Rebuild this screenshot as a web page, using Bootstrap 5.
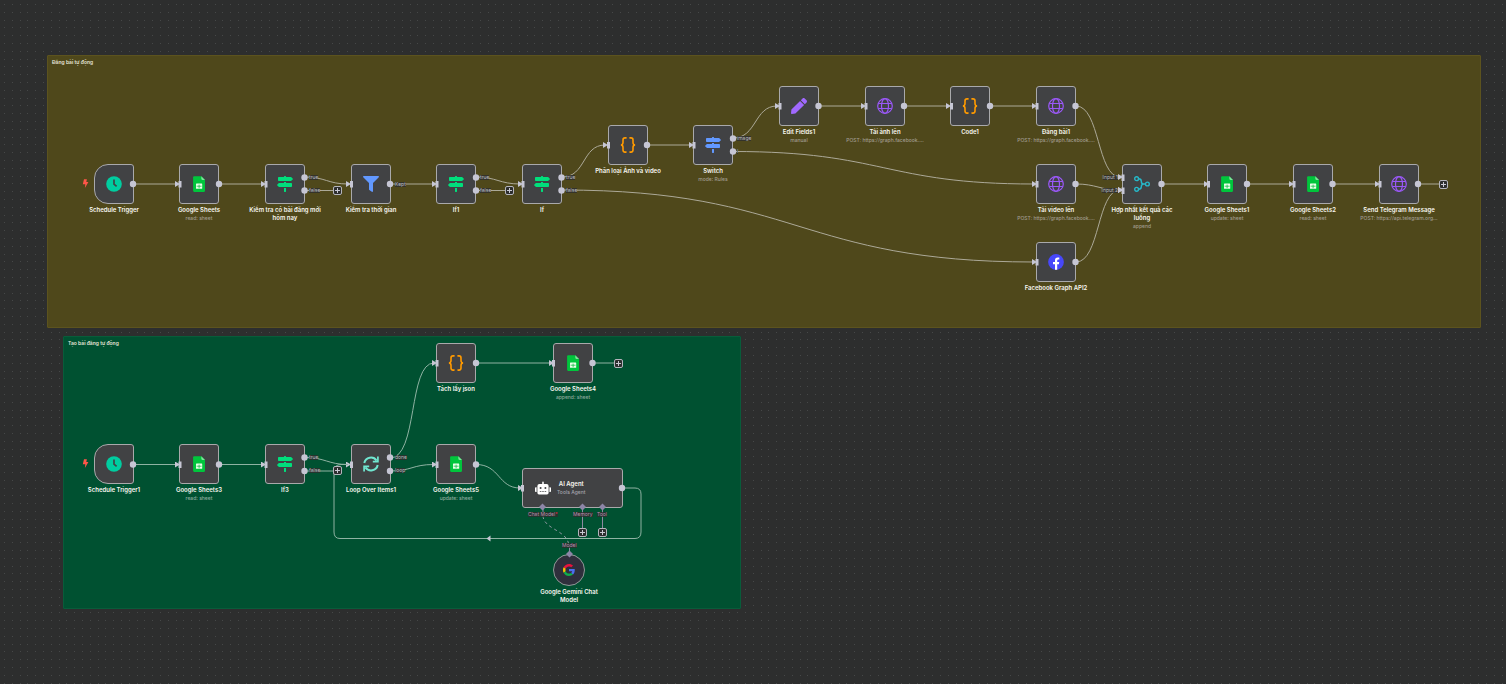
<!DOCTYPE html>
<html lang="vi">
<head>
<meta charset="utf-8">
<meta name="viewport" content="width=device-width, initial-scale=1">
<title>Workflow</title>
<link href="https://cdn.jsdelivr.net/npm/bootstrap@5.3.0/dist/css/bootstrap.min.css" rel="stylesheet">
<style>
  body { background: #2d2e2e; font-family: Inter, "Noto Sans", sans-serif; color: #f8f7f0; }
  .canvas { min-height: 100vh; min-width: 1500px; }
  .layer { left: 0; top: 0; pointer-events: none; }
  .sticky { border: 1px solid; border-radius: 1px; padding: 3px 4px; }
  .sticky h2 { font-size: 5px; line-height: 7px; font-weight: 600; color: #e6e4d8; }
  .sticky-post { left: 47px; top: 55px; width: 1434px; height: 273px; background: #4f481b; border-color: #5c531e; }
  .sticky-make { left: 63px; top: 336px; width: 678px; height: 273px; background: #005131; border-color: #085c3a; }

  .step { width: 80px; font-size: 6px; line-height: 8px; font-weight: 600; text-align: center; white-space: nowrap; }
  .tile { width: 40px; height: 40px; background: #414244; border: 1px solid #a9a9ab; border-radius: 3px; margin-bottom: 2px; }
  .tile.start { border-radius: 14px 3px 3px 14px; }
  .tile svg { width: 16px; height: 16px; }
  .info { font-size: 5px; line-height: 8px; font-weight: 500; color: #a19d90; }
  .sheet-two .info { color: #8dab9f; }
  .bolt { width: 7px; height: 9px; left: 8px; top: 15px; }

  .c1 { left: 74px } .c2 { left: 159px } .c3 { left: 245px } .c4 { left: 331px } .c5 { left: 416px }
  .c6 { left: 502px } .c7 { left: 588px } .c8 { left: 673px } .c9 { left: 759px } .c10 { left: 845px }
  .c11 { left: 930px } .c12 { left: 1016px } .c13 { left: 1102px } .c14 { left: 1187px } .c15 { left: 1273px }
  .c16 { left: 1359px } .c-mid { left: 533px } .c-model { left: 529px }
  .r1 { top: 86px } .r2 { top: 125px } .r3 { top: 164px } .r4 { top: 242px } .r5 { top: 343px } .r6 { top: 444px }
  .r-agent { top: 468px } .r-model { top: 554px }

  .port { font-size: 5px; line-height: 5px; font-weight: 400; color: #bcbcc0; background: #2d2e2ecc; left: 43px; white-space: nowrap; }
  .port-up { top: 10px } .port-down { top: 23px } .port-mid { top: 17px }
  .port-in { left: auto; right: 43px; }
  .agent { width: 100px; left: 522px; }
  .agent .tile { width: 101px; }
  .agent .tile > div { margin-left: 6px; }
  .agent .info { color: #a3a3ad; }
  .agent-port { color: #b98fae; top: 44px; }
  .p-chat { left: 6px } .p-memory { left: 51px } .p-tool { left: 75px }
  .model-port { left: 33px; top: -11px; color: #b98fae; }
  .round { width: 32px; height: 32px; border-radius: 50%; background: #2f2f3c; margin-bottom: 2px; border: 1px solid #8f9a98; }
  .round svg { width: 12px; height: 12px; }

  .add { width: 9px; height: 9px; padding: 0; border: 1px solid #b5b5bd; border-radius: 2px; background: #2d2e2e; }
  .add svg { width: 5px; height: 5px; display: block; margin: 1px; }
  .a1 { left: 333px; top: 186px } .a2 { left: 505px; top: 186px } .a3 { left: 1439px; top: 180px }
  .a4 { left: 614px; top: 359px } .a5 { left: 333px; top: 466px } .a6 { left: 578px; top: 528px } .a7 { left: 598px; top: 528px }
</style>
<script src="https://cdn.jsdelivr.net/npm/bootstrap@5.3.0/dist/js/bootstrap.bundle.min.js"></script>
</head>
<body>
<svg class="d-none">
  <symbol id="clock" viewBox="0 0 16 16"><circle cx="8" cy="8" r="7.8" fill="#00cda0"/><path d="M8 3.6V8.2L10.6 10.4" fill="none" stroke="#404346" stroke-width="1.7"/></symbol>
  <symbol id="sheet" viewBox="0 0 16 16"><path d="M3.2.2H10.300L14 3.900V14.800Q14 15.900 12.900 15.900H3.200Q2.100 15.900 2.100 14.800V1.300Q2.100.2 3.200.2Z" fill="#00c53c"/><path d="M10.300.2L14 3.900H11.400Q10.300 3.900 10.300 2.800Z" fill="#7fe29a"/><rect x="5" y="7.600" width="6.200" height="5.200" rx=".4" fill="#e9ffe9"/><path d="M5.600 10.200H10.600M8.100 8.600V12.300" stroke="#00b838" stroke-width=".7"/></symbol>
  <symbol id="signs" viewBox="0 0 512 512"><path fill="currentColor" d="M507.300 84.700L459.300 36.700C456.300 33.700 452.200 32 448 32H288V16c0-8.800-7.200-16-16-16h-32c-8.800 0-16 7.200-16 16v16H56c-13.300 0-24 10.700-24 24v80c0 13.300 10.700 24 24 24h392c4.200 0 8.300-1.700 11.300-4.700l48-48c6.300-6.200 6.300-16.400 0-22.600zM224 496c0 8.800 7.200 16 16 16h32c8.800 0 16-7.200 16-16V384h-64v112zm232-272H288v-32h-64v32H64c-4.200 0-8.300 1.700-11.300 4.700l-48 48c-6.200 6.200-6.200 16.400 0 22.600l48 48c3 3 7.100 4.700 11.300 4.700h392c13.300 0 24-10.700 24-24v-80c0-13.300-10.700-24-24-24z"/></symbol>
  <symbol id="filter" viewBox="0 0 512 512"><path fill="#6298ff" d="M487.976 0H24.028C2.710 0-8.047 25.866 7.058 40.971L192 225.941V432c0 7.831 3.821 15.170 10.237 19.662l80 55.980C298.020 518.690 320 507.493 320 487.980V225.941l184.947-184.970C520.021 25.896 509.338 0 487.976 0z"/></symbol>
  <symbol id="braces" viewBox="0 0 16 16"><path d="M6 .9H5Q3 .9 3 2.900V5.600Q3 7.900.9 8Q3 8.100 3 10.400V13.100Q3 15.100 5 15.100H6M10 .9H11Q13 .9 13 2.900V5.600Q13 7.900 15.100 8Q13 8.100 13 10.400V13.100Q13 15.100 11 15.100H10" fill="none" stroke="#ff9a00" stroke-width="1.600" stroke-linecap="round"/></symbol>
  <symbol id="pencil" viewBox="0 0 512 512"><path fill="#a069ff" d="M290.740 93.240l128.020 128.020-277.990 277.990-114.140 12.600C11.350 513.540-1.560 500.620.14 485.340l12.700-114.220 277.900-277.880zm207.200-19.060l-60.110-60.110c-18.750-18.750-49.160-18.750-67.910 0l-56.550 56.550 128.020 128.020 56.550-56.550c18.750-18.760 18.750-49.160 0-67.910z"/></symbol>
  <symbol id="globe" viewBox="0 0 16 16"><g fill="none" stroke="#9a58f8" stroke-width="1.200"><circle cx="8" cy="8" r="7.300"/><ellipse cx="8" cy="8" rx="3.500" ry="7.300"/><path d="M1.200 5.500H14.800M1.200 10.500H14.800"/></g></symbol>
  <symbol id="merge" viewBox="0 0 16 16"><g fill="none" stroke="#27b8c9" stroke-width="1.400"><circle cx="2.600" cy="2.700" r="1.900"/><circle cx="2.600" cy="13.300" r="1.900"/><circle cx="13.400" cy="8" r="1.900"/><path d="M4.500 2.700Q7.300 2.700 7.300 5.200Q7.300 8 9.600 8Q7.300 8 7.300 10.800Q7.300 13.300 4.500 13.300M9.300 8H11.500"/></g></symbol>
  <symbol id="facebook" viewBox="0 0 16 16"><circle cx="8" cy="8" r="7.900" fill="#4747fb"/><path d="M7 15.800V10.200H5V8H7V6.300Q7 3.500 9.700 3.500H11.300V5.500H10.200Q9.200 5.500 9.200 6.500V8H11.200L10.900 10.200H9.200V15.800Z" fill="#fff"/></symbol>
  <symbol id="sync" viewBox="0 0 16 16"><g fill="none" stroke="#70e6d0" stroke-width="2"><path d="M1.300 7A6.800 6.800 0 0 1 13.600 4.600M14.700 9A6.800 6.800 0 0 1 2.400 11.400"/><path d="M14.900.6V5.700H9.800M1.100 15.400V10.300H6.200" stroke-width="1.700"/></g></symbol>
  <symbol id="robot" viewBox="0 0 640 512"><path fill="#fff" d="M32,224H64V416H32A32,32,0,0,1,0,384V256A32,32,0,0,1,32,224Zm512-48V448a64,64,0,0,1-64,64H160a64,64,0,0,1-64-64V176a80,80,0,0,1,80-80H288V32a32,32,0,0,1,64,0V96H464A80,80,0,0,1,544,176ZM264,256a40,40,0,1,0-40,40A40,40,0,0,0,264,256Zm-8,128H192v32h64Zm96,0H288v32h64ZM456,256a40,40,0,1,0-40,40A40,40,0,0,0,456,256Zm-8,128H384v32h64ZM640,256V384a32,32,0,0,1-32,32H576V224h32A32,32,0,0,1,640,256Z"/></symbol>
  <symbol id="google" viewBox="0 0 48 48"><path fill="#e8113c" d="M24 9.500c3.540 0 6.710 1.220 9.210 3.600l6.850-6.850C35.900 2.380 30.470 0 24 0 14.620 0 6.510 5.380 2.560 13.220l7.980 6.190C12.430 13.720 17.740 9.500 24 9.500z"/><path fill="#4b6ff0" d="M46.980 24.550c0-1.570-.15-3.090-.38-4.550H24v9.020h12.940c-.58 2.960-2.260 5.480-4.780 7.180l7.730 6c4.510-4.180 7.090-10.360 7.090-17.650z"/><path fill="#f5c400" d="M10.530 28.590c-.48-1.450-.76-2.990-.76-4.590s.27-3.140.76-4.590l-7.980-6.190C.92 16.460 0 20.120 0 24c0 3.880.92 7.540 2.560 10.780l7.970-6.190z"/><path fill="#0fae4b" d="M24 48c6.480 0 11.930-2.130 15.890-5.810l-7.730-6c-2.150 1.450-4.920 2.300-8.160 2.300-6.260 0-11.570-4.220-13.470-9.910l-7.980 6.190C6.510 42.620 14.620 48 24 48z"/></symbol>
  <symbol id="bolt" viewBox="0 0 7 9"><path d="M2 .2H4.900L4.300 3H6.400L2.900 8.900L3.300 5.300H.8Z" fill="#ff5549"/></symbol>
  <symbol id="plus" viewBox="0 0 5 5"><path d="M2.500 0V5M0 2.500H5" stroke="#c9c9d2" stroke-width="1"/></symbol>
</svg>

<main class="canvas position-relative overflow-hidden">
  <!-- dotted canvas grid -->
  <svg class="layer position-absolute w-100 h-100" aria-hidden="true">
    <defs>
      <pattern id="dots" width="39" height="39" patternUnits="userSpaceOnUse">
        <path stroke="#464848" stroke-width="1" stroke-dasharray="1 7 1 7 1 6 1 7 1 7" d="M4 4.500H43M4 12.500H43M4 20.500H43M4 27.500H43M4 35.500H43"/>
      </pattern>
    </defs>
    <rect width="100%" height="100%" fill="url(#dots)"/>
  </svg>

  <section class="sticky sticky-post position-absolute"><h2 class="m-0">Đăng bài tự động</h2></section>
  <section class="sticky sticky-make position-absolute"><h2 class="m-0">Tạo bài đăng tự động</h2></section>

  <!-- connections -->
  <svg class="layer position-absolute w-100 h-100" aria-hidden="true">
    <defs><marker id="tip" markerUnits="userSpaceOnUse" markerWidth="5" markerHeight="6" refX="2" refY="3" orient="0"><path d="M0 0L5 3L0 6Z" fill="#c6c6d4"/></marker></defs>
    <g fill="none" stroke="#aca998">
      <path marker-end="url(#tip)" d="M133 184H177"/><path marker-end="url(#tip)" d="M219 184H263"/>
      <path marker-end="url(#tip)" d="M305 177C325 177 328 184 348 184"/><path d="M305 190.500H333"/>
      <path marker-end="url(#tip)" d="M390 184H434"/><path marker-end="url(#tip)" d="M476 177C496 177 500 184 520 184"/><path d="M476 190.500H505"/>
      <path marker-end="url(#tip)" d="M562 177C586 177 582 145 605 145"/><path marker-end="url(#tip)" d="M562 190C798 190 798 262 1034 262"/>
      <path marker-end="url(#tip)" d="M647 145H691"/><path marker-end="url(#tip)" d="M733 138C757 138 754 106 777 106"/>
      <path marker-end="url(#tip)" d="M733 151.500C884 151.500 884 184 1034 184"/>
      <path marker-end="url(#tip)" d="M819 106H863"/><path marker-end="url(#tip)" d="M904 106H948"/><path marker-end="url(#tip)" d="M990 106H1034"/>
      <path marker-end="url(#tip)" d="M1076 106C1100 106 1097 177 1120 177"/><path marker-end="url(#tip)" d="M1076 184C1096 184 1100 190 1120 190"/><path marker-end="url(#tip)" d="M1076 262C1100 262 1097 190 1120 190"/>
      <path marker-end="url(#tip)" d="M1162 184H1206"/><path marker-end="url(#tip)" d="M1247 184H1291"/><path marker-end="url(#tip)" d="M1333 184H1377"/><path d="M1419 184H1440"/>
    </g>
    <g fill="none" stroke="#8fb3a3">
      <path marker-end="url(#tip)" d="M133 464.500H177"/><path marker-end="url(#tip)" d="M219 464.500H263"/>
      <path marker-end="url(#tip)" d="M305 457.500C325 457.500 328 464.500 348 464.500"/><path d="M305 471H333"/>
      <path marker-end="url(#tip)" d="M390 458C418 458 408 363 434 363"/><path marker-end="url(#tip)" d="M390 471C412 471 412 464.500 434 464.500"/>
      <path marker-end="url(#tip)" d="M476 363H551"/><path d="M593 363H614"/>
      <path marker-end="url(#tip)" d="M476 464.500C500 464.500 498 488 520 488"/>
      <path d="M622 488H635Q641 488 641 494V532Q641 538.500 635 538.500H340Q334 538.500 334 532V472Q334 464.500 341 464.500H348"/>
      <path d="M486.500 538.500L490.500 535.500V541.500Z" fill="#c6c6d4" stroke="none"/>
      <path d="M543 507V516M582.500 507V529M602.500 507V529M569.500 546V554" stroke="#8c8aa0"/>
      <path d="M543 516C544 530 569 530 569 547" stroke="#8c97a0" stroke-dasharray="3 3"/>
    </g>
  </svg>

  <article class="step position-absolute d-flex flex-column align-items-center c1 r3"><svg class="bolt position-absolute"><use href="#bolt"/></svg><div class="tile start d-flex align-items-center justify-content-center"><svg><use href="#clock"/></svg></div>Schedule Trigger</article>
  <article class="step position-absolute d-flex flex-column align-items-center c2 r3"><div class="tile d-flex align-items-center justify-content-center"><svg><use href="#sheet"/></svg></div>Google Sheets<div class="info">read: sheet</div></article>
  <article class="step position-absolute d-flex flex-column align-items-center c3 r3"><div class="tile position-relative d-flex align-items-center justify-content-center"><svg color="#00df7c"><use href="#signs"/></svg><span class="port port-up position-absolute">true</span><span class="port port-down position-absolute">false</span></div><div>Kiểm tra có bài đăng mới<br>hôm nay</div></article>
  <article class="step position-absolute d-flex flex-column align-items-center c4 r3"><div class="tile position-relative d-flex align-items-center justify-content-center"><svg><use href="#filter"/></svg><span class="port port-mid position-absolute">Kept</span></div>Kiểm tra thời gian</article>
  <article class="step position-absolute d-flex flex-column align-items-center c5 r3"><div class="tile position-relative d-flex align-items-center justify-content-center"><svg color="#00df7c"><use href="#signs"/></svg><span class="port port-up position-absolute">true</span><span class="port port-down position-absolute">false</span></div>If1</article>
  <article class="step position-absolute d-flex flex-column align-items-center c6 r3"><div class="tile position-relative d-flex align-items-center justify-content-center"><svg color="#00df7c"><use href="#signs"/></svg><span class="port port-up position-absolute">true</span><span class="port port-down position-absolute">false</span></div>If</article>
  <article class="step position-absolute d-flex flex-column align-items-center c7 r2"><div class="tile d-flex align-items-center justify-content-center"><svg><use href="#braces"/></svg></div>Phân loại Ảnh và video</article>
  <article class="step position-absolute d-flex flex-column align-items-center c8 r2"><div class="tile position-relative d-flex align-items-center justify-content-center"><svg color="#6298ff"><use href="#signs"/></svg><span class="port port-up position-absolute">image</span><span class="port port-down position-absolute">l</span></div>Switch<div class="info">mode: Rules</div></article>
  <article class="step position-absolute d-flex flex-column align-items-center c9 r1"><div class="tile d-flex align-items-center justify-content-center"><svg><use href="#pencil"/></svg></div>Edit Fields1<div class="info">manual</div></article>
  <article class="step position-absolute d-flex flex-column align-items-center c10 r1"><div class="tile d-flex align-items-center justify-content-center"><svg><use href="#globe"/></svg></div>Tải ảnh lên<div class="info">POST: https://graph.facebook....</div></article>
  <article class="step position-absolute d-flex flex-column align-items-center c11 r1"><div class="tile d-flex align-items-center justify-content-center"><svg><use href="#braces"/></svg></div>Code1</article>
  <article class="step position-absolute d-flex flex-column align-items-center c12 r1"><div class="tile d-flex align-items-center justify-content-center"><svg><use href="#globe"/></svg></div>Đăng bài1<div class="info">POST: https://graph.facebook....</div></article>
  <article class="step position-absolute d-flex flex-column align-items-center c12 r3"><div class="tile d-flex align-items-center justify-content-center"><svg><use href="#globe"/></svg></div>Tải video lên<div class="info">POST: https://graph.facebook....</div></article>
  <article class="step position-absolute d-flex flex-column align-items-center c12 r4"><div class="tile d-flex align-items-center justify-content-center"><svg><use href="#facebook"/></svg></div>Facebook Graph API2</article>
  <article class="step position-absolute d-flex flex-column align-items-center c13 r3"><div class="tile position-relative d-flex align-items-center justify-content-center"><svg><use href="#merge"/></svg><span class="port port-in port-up position-absolute">Input 1</span><span class="port port-in port-down position-absolute">Input 2</span></div><div>Hợp nhất kết quả các<br>luồng</div><div class="info">append</div></article>
  <article class="step position-absolute d-flex flex-column align-items-center c14 r3"><div class="tile d-flex align-items-center justify-content-center"><svg><use href="#sheet"/></svg></div>Google Sheets1<div class="info">update: sheet</div></article>
  <article class="step position-absolute d-flex flex-column align-items-center c15 r3"><div class="tile d-flex align-items-center justify-content-center"><svg><use href="#sheet"/></svg></div>Google Sheets2<div class="info">read: sheet</div></article>
  <article class="step position-absolute d-flex flex-column align-items-center c16 r3"><div class="tile d-flex align-items-center justify-content-center"><svg><use href="#globe"/></svg></div>Send Telegram Message<div class="info">POST: https://api.telegram.org...</div></article>

  <div class="sheet-two">
    <article class="step position-absolute d-flex flex-column align-items-center c5 r5"><div class="tile d-flex align-items-center justify-content-center"><svg><use href="#braces"/></svg></div>Tách lấy json</article>
    <article class="step position-absolute d-flex flex-column align-items-center c-mid r5"><div class="tile d-flex align-items-center justify-content-center"><svg><use href="#sheet"/></svg></div>Google Sheets4<div class="info">append: sheet</div></article>
    <article class="step position-absolute d-flex flex-column align-items-center c1 r6"><svg class="bolt position-absolute"><use href="#bolt"/></svg><div class="tile start d-flex align-items-center justify-content-center"><svg><use href="#clock"/></svg></div>Schedule Trigger1</article>
    <article class="step position-absolute d-flex flex-column align-items-center c2 r6"><div class="tile d-flex align-items-center justify-content-center"><svg><use href="#sheet"/></svg></div>Google Sheets3<div class="info">read: sheet</div></article>
    <article class="step position-absolute d-flex flex-column align-items-center c3 r6"><div class="tile position-relative d-flex align-items-center justify-content-center"><svg color="#00df7c"><use href="#signs"/></svg><span class="port port-up position-absolute">true</span><span class="port port-down position-absolute">false</span></div>If3</article>
    <article class="step position-absolute d-flex flex-column align-items-center c4 r6"><div class="tile position-relative d-flex align-items-center justify-content-center"><svg><use href="#sync"/></svg><span class="port port-up position-absolute">done</span><span class="port port-down position-absolute">loop</span></div>Loop Over Items1</article>
    <article class="step position-absolute d-flex flex-column align-items-center c5 r6"><div class="tile d-flex align-items-center justify-content-center"><svg><use href="#sheet"/></svg></div>Google Sheets5<div class="info">update: sheet</div></article>
    <article class="step agent position-absolute r-agent"><div class="tile d-flex align-items-center ps-2"><svg class="ms-1"><use href="#robot"/></svg><div>AI Agent<div class="info">Tools Agent</div></div></div><span class="port agent-port p-chat position-absolute">Chat Model<span class="text-danger">*</span></span><span class="port agent-port p-memory position-absolute">Memory</span><span class="port agent-port p-tool position-absolute">Tool</span></article>
    <article class="step position-absolute d-flex flex-column align-items-center c-model r-model"><span class="port model-port position-absolute">Model</span><div class="round d-flex align-items-center justify-content-center"><svg><use href="#google"/></svg></div><div>Google Gemini Chat<br>Model</div></article>
  </div>

  <!-- connection handles, drawn over the tiles -->
  <svg class="layer position-absolute w-100 h-100" aria-hidden="true">
    <defs>
      <circle id="out" r="3.200" fill="#c6c6d4"/>
      <rect id="in" x="-1.500" y="-3" width="3" height="6.500" fill="#c6c6d4"/>
      <path id="gem" d="M0-3.500L3.500 0L0 3.500L-3.500 0Z" fill="#8d86a8"/>
    </defs>
    <use href="#out" x="133" y="184"/><use href="#out" x="219" y="184"/><use href="#out" x="304.500" y="177.500"/><use href="#out" x="304.500" y="190.500"/><use href="#out" x="390" y="184"/>
    <use href="#out" x="476" y="177.500"/><use href="#out" x="476" y="190.500"/><use href="#out" x="561.500" y="177.500"/><use href="#out" x="561.500" y="190.500"/><use href="#out" x="647" y="145"/>
    <use href="#out" x="733" y="138.500"/><use href="#out" x="733" y="151.500"/><use href="#out" x="818.500" y="106"/><use href="#out" x="904" y="106"/><use href="#out" x="990" y="106"/><use href="#out" x="1075.500" y="106"/>
    <use href="#out" x="1075.500" y="184"/><use href="#out" x="1075.500" y="262"/><use href="#out" x="1161.500" y="184"/><use href="#out" x="1247" y="184"/><use href="#out" x="1332.500" y="184"/><use href="#out" x="1418" y="184"/>
    <use href="#in" x="180" y="184"/><use href="#in" x="266" y="184"/><use href="#in" x="351.500" y="184"/><use href="#in" x="437" y="184"/><use href="#in" x="523" y="184"/><use href="#in" x="608.500" y="145"/><use href="#in" x="694" y="145"/>
    <use href="#in" x="780" y="106"/><use href="#in" x="866" y="106"/><use href="#in" x="951.500" y="106"/><use href="#in" x="1037" y="106"/><use href="#in" x="1037" y="184"/><use href="#in" x="1037" y="262"/>
    <use href="#in" x="1123" y="177.500"/><use href="#in" x="1123" y="190.500"/><use href="#in" x="1208.500" y="184"/><use href="#in" x="1294" y="184"/><use href="#in" x="1380" y="184"/>
    <use href="#out" x="133" y="464.500"/><use href="#out" x="219" y="464.500"/><use href="#out" x="304.500" y="457.500"/><use href="#out" x="304.500" y="471"/><use href="#out" x="390" y="457.500"/><use href="#out" x="390" y="471"/>
    <use href="#out" x="476" y="464.500"/><use href="#out" x="476" y="363"/><use href="#out" x="592.500" y="363"/><use href="#out" x="622" y="488"/>
    <use href="#in" x="180" y="464.500"/><use href="#in" x="266" y="464.500"/><use href="#in" x="351.500" y="464.500"/><use href="#in" x="437" y="464.500"/><use href="#in" x="437" y="363"/><use href="#in" x="553.500" y="363"/><use href="#in" x="522.500" y="488"/>
    <use href="#gem" x="542.500" y="507"/><use href="#gem" x="582.500" y="507"/><use href="#gem" x="602.500" y="507"/><use href="#gem" x="569.500" y="554"/>
  </svg>

  <button class="add a1 position-absolute" type="button" aria-label="Add step"><svg><use href="#plus"/></svg></button>
  <button class="add a2 position-absolute" type="button" aria-label="Add step"><svg><use href="#plus"/></svg></button>
  <button class="add a3 position-absolute" type="button" aria-label="Add step"><svg><use href="#plus"/></svg></button>
  <button class="add a4 position-absolute" type="button" aria-label="Add step"><svg><use href="#plus"/></svg></button>
  <button class="add a5 position-absolute" type="button" aria-label="Add step"><svg><use href="#plus"/></svg></button>
  <button class="add a6 position-absolute" type="button" aria-label="Add memory"><svg><use href="#plus"/></svg></button>
  <button class="add a7 position-absolute" type="button" aria-label="Add tool"><svg><use href="#plus"/></svg></button>
</main>
</body>
</html>
